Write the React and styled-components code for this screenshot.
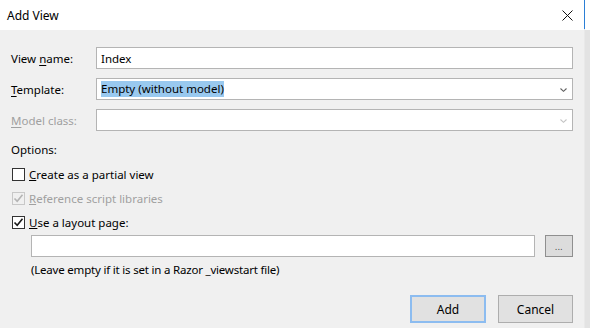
import styled, { createGlobalStyle } from "styled-components";

const GlobalStyle = createGlobalStyle`
  html, body {
    margin: 0;
    padding: 0;
    background: #e6e6e6;
    font-family: "Noto Sans", "Open Sans", sans-serif;
    font-size: 11.5px;
    color: #000;
  }
`;

const Chevron = ({ disabled }) => (
  <svg width="9" height="6" viewBox="0 0 9 6">
    <path d="M1.5 1.5 L4.5 4.3 L7.5 1.5" fill="none" stroke={disabled ? "#c4c4c4" : "#606060"} strokeWidth="1.1" />
  </svg>
);

const Check = ({ disabled }) => (
  <svg width="11" height="11" viewBox="0 0 11 11">
    <path d="M1.5 5.5 L4.2 8.3 L9.5 1.8" fill="none" stroke={disabled ? "#b4b4b4" : "#1a1a1a"} strokeWidth="1.6" />
  </svg>
);

const App = () => {
  return (
    <>
      <GlobalStyle />
      <Window>
        <Dialog>
          <TitleBar>
            <Title>Add View</Title>
            <Close>
              <svg width="11" height="11" viewBox="0 0 11 11">
                <path d="M0.5 0.5 L10.5 10.5 M10.5 0.5 L0.5 10.5" stroke="#111" strokeWidth="1" />
              </svg>
            </Close>
          </TitleBar>
          <Body>
            <Form>
              <Label>
                View <u>n</u>ame:
              </Label>
              <Field>Index</Field>
              <Label>
                <u>T</u>emplate:
              </Label>
              <Field>
                <Selected>Empty (without model)</Selected>
                <Arrow>
                  <Chevron />
                </Arrow>
              </Field>
              <Label $disabled>
                <u>M</u>odel class:
              </Label>
              <Field>
                <Arrow>
                  <Chevron disabled />
                </Arrow>
              </Field>
            </Form>
            <Options>Options:</Options>
            <CheckRow>
              <Box />
              <span>
                <u>C</u>reate as a partial view
              </span>
            </CheckRow>
            <CheckRow $disabled>
              <Box $disabled>
                <Check disabled />
              </Box>
              <span>
                <u>R</u>eference script libraries
              </span>
            </CheckRow>
            <CheckRow>
              <Box>
                <Check />
              </Box>
              <span>
                <u>U</u>se a layout page:
              </span>
            </CheckRow>
            <LayoutRow>
              <Field $grow />
              <Browse>
                <Dots>...</Dots>
              </Browse>
            </LayoutRow>
            <Hint>(Leave empty if it is set in a Razor _viewstart file)</Hint>
            <Buttons>
              <Button $primary>Add</Button>
              <Button $w="75px">Cancel</Button>
            </Buttons>
          </Body>
        </Dialog>
        <Edge />
      </Window>
    </>
  );
};

export default App;

const Window = styled.div`
  display: flex;
  width: 590px;
  height: 328px;
  overflow: hidden;
`;
const Dialog = styled.div`
  width: 584px;
  display: flex;
  flex-direction: column;
`;
const Edge = styled.div`
  flex: 1;
  background: linear-gradient(#ffffff 0 30px, #e3e3e3 30px);
  border-left: 1px solid #2b7fd6;
  border-image: linear-gradient(#2b7fd6 0 30px, #e9e9e9 30px) 1;
`;
const TitleBar = styled.div`
  height: 30px;
  background: #fff;
  display: flex;
  align-items: center;
  justify-content: space-between;
  padding: 0 11px 0 7px;
`;
const Title = styled.div`
  font-size: 12px;
  margin-top: 1px;
`;
const Close = styled.div`
  display: flex;
  align-items: center;
  margin-top: 1px;
`;
const Body = styled.div`
  flex: 1;
  background: #f0f0f0;
  padding: 17px 11px 0 11px;
  display: flex;
  flex-direction: column;
`;
const Form = styled.div`
  display: grid;
  grid-template-columns: 85px 477px;
  row-gap: 9px;
  align-items: center;
`;
const Label = styled.label`
  color: ${(p) => (p.$disabled ? "#a0a0a0" : "#000")};
  u {
    text-decoration-thickness: 1px;
    text-underline-offset: 2px;
  }
`;
const Field = styled.div`
  box-sizing: border-box;
  height: 22px;
  background: #fff;
  border: 1px solid #b4b4b4;
  display: flex;
  align-items: center;
  padding: 0 4px;
  position: relative;
  ${(p) => p.$grow && "flex: 1;"}
`;
const Selected = styled.span`
  background: #99c9ef;
  line-height: 16px;
`;
const Arrow = styled.span`
  position: absolute;
  right: 4px;
  top: 8px;
  display: flex;
`;
const Options = styled.div`
  margin-top: 11px;
  line-height: 16px;
`;
const CheckRow = styled.div`
  display: flex;
  align-items: center;
  gap: 4px;
  margin-top: 8px;
  height: 16px;
  color: ${(p) => (p.$disabled ? "#a0a0a0" : "#000")};
  padding-left: 1px;
`;
const Box = styled.span`
  box-sizing: border-box;
  width: 13px;
  height: 13px;
  border: 1px solid ${(p) => (p.$disabled ? "#c8c8c8" : "#333")};
  background: ${(p) => (p.$disabled ? "#f0f0f0" : "#fff")};
  display: flex;
  align-items: center;
  justify-content: center;
`;
const LayoutRow = styled.div`
  display: flex;
  gap: 10px;
  margin-top: 5px;
  padding-left: 20px;
  height: 22px;
`;
const Browse = styled.div`
  box-sizing: border-box;
  width: 28px;
  height: 22px;
  background: #dcdcdc;
  border: 1px solid #8f8f8f;
  display: flex;
  align-items: flex-end;
  justify-content: center;
  padding-bottom: 5px;
`;
const Dots = styled.span`
  font-size: 8px;
  line-height: 8px;
  letter-spacing: 0.5px;
  color: #333;
`;
const Hint = styled.div`
  padding-left: 20px;
  margin-top: 5px;
  line-height: 16px;
  letter-spacing: -0.2px;
`;
const Buttons = styled.div`
  display: flex;
  justify-content: flex-end;
  gap: 12px;
  margin-top: 17px;
`;
const Button = styled.div`
  box-sizing: border-box;
  width: ${(p) => p.$w || "76px"};
  height: 28px;
  background: #e1e1e1;
  border: ${(p) => (p.$primary ? "2px solid #8cbcf0" : "1px solid #adadad")};
  display: flex;
  align-items: center;
  justify-content: center;
  font-size: 12px;
`;
